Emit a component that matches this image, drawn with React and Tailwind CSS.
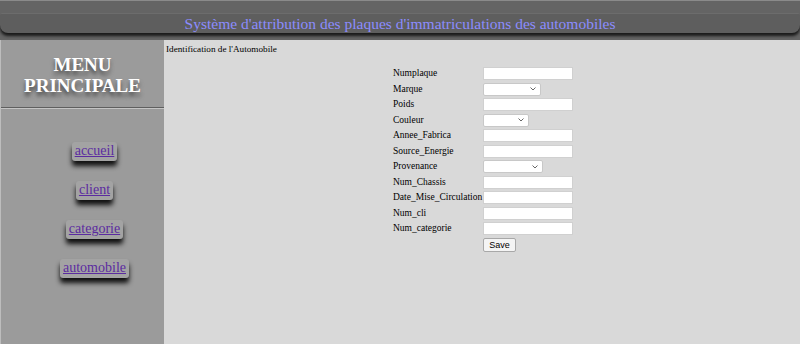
import React from 'react';

const fields = [
  { label: 'Numplaque', type: 'text' },
  { label: 'Marque', type: 'select', w: 'w-[58px]' },
  { label: 'Poids', type: 'text' },
  { label: 'Couleur', type: 'select', w: 'w-[46px]' },
  { label: 'Annee_Fabrica', type: 'text' },
  { label: 'Source_Energie', type: 'text' },
  { label: 'Provenance', type: 'select', w: 'w-[60px]' },
  { label: 'Num_Chassis', type: 'text' },
  { label: 'Date_Mise_Circulation', type: 'text' },
  { label: 'Num_cli', type: 'text' },
  { label: 'Num_categorie', type: 'text' },
];

const links = ['accueil', 'client', 'categorie', 'automobile'];

function Field({ f }) {
  if (f.type === 'select') {
    return (
      <div className={`${f.w} h-[13px] bg-white border border-[#c8c8c8] rounded-[2px] flex items-center justify-end pr-[4px]`}>
        <svg width="6" height="4" viewBox="0 0 6 4">
          <path d="M0.5 0.5 L3 3 L5.5 0.5" fill="none" stroke="#666" strokeWidth="1" />
        </svg>
      </div>
    );
  }
  return <div className="w-[90px] h-[13px] bg-white border border-[#d0d0d0]" />;
}

export default function App() {
  return (
    <div className="w-[800px] h-[344px] overflow-hidden flex flex-col bg-[#d9d9d9] font-['Liberation_Serif',serif]">
      {/* bandeau titre */}
      <div className="h-[40px] bg-[#646464] border-t border-[#8a8a8a] pt-[12px] shrink-0">
        <div className="h-[20px] bg-[#5e5e5e] border-t border-[#6c6c6c] rounded-b-[8px] rounded-t-[2px] shadow-[0_3px_3px_#1a1a1a] flex items-center justify-center">
          <span className="text-[#8c8cff] text-[15.5px] leading-none font-['Liberation_Serif',serif]">Système d'attribution des plaques d'immatriculations des automobiles</span>
        </div>
      </div>

      <div className="flex flex-1">
        {/* menu */}
        <div className="w-[164px] bg-[#9b9b9b] border-l border-[#bdbdbd] flex flex-col">
          <div className="h-[68px] flex flex-col items-center justify-center pt-[2px] border-b border-[#5f5f5f] text-white font-bold text-[19px] leading-[21px] [text-shadow:0_4px_4px_#444]">
            <span>MENU</span>
            <span>PRINCIPALE</span>
          </div>
          <div className="h-px bg-[#c4c4c4]" />
          <div className="flex flex-col items-center gap-[20px] pt-[33px] pl-[24px]">
            {links.map((l) => (
              <a
                key={l}
                href="#"
                className="bg-[#a3a3a3] rounded-[3px] px-[3px] pb-[2px] text-[14px] leading-[17px] text-[#5b2ba0] underline shadow-[0_5px_5px_#111] font-['Liberation_Serif',serif]"
              >
                {l}
              </a>
            ))}
          </div>
        </div>

        {/* formulaire */}
        <div className="flex-1 pl-[2px] pt-[3px] font-['Liberation_Serif',serif]">
          <p className="text-[9.2px] text-black leading-[12px] font-['Liberation_Serif',serif]">Identification de l'Automobile</p>
          <div className="flex justify-center pt-[11px]">
            <div className="grid grid-cols-[90px_90px] text-[9.5px] text-black font-['Liberation_Serif',serif]">
              {fields.map((f) => (
                <React.Fragment key={f.label}>
                  <div className="h-[15.5px] flex items-center leading-none whitespace-nowrap">{f.label}</div>
                  <div className="h-[15.5px] flex items-center">
                    <Field f={f} />
                  </div>
                </React.Fragment>
              ))}
              <div />
              <div className="pt-[1px]">
                <button className="h-[14px] w-[33px] bg-[#f4f4f4] border border-[#a8a8a8] rounded-[2px] text-[9px] font-['Liberation_Sans',sans-serif] leading-none">
                  Save
                </button>
              </div>
            </div>
          </div>
        </div>
      </div>
    </div>
  );
}
